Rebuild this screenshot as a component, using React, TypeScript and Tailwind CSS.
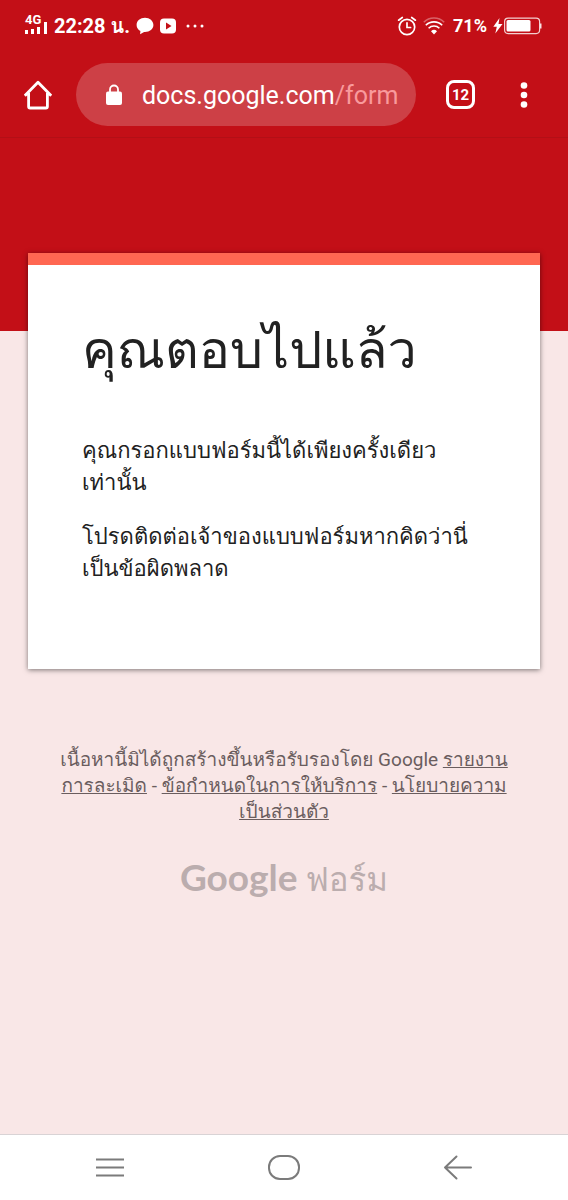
import React from "react";

function SignalIcon() {
  return (
    <svg width="24" height="26" viewBox="0 0 24 26" fill="#fff" aria-hidden="true">
      <rect x="1" y="17" width="3" height="4" />
      <rect x="7" y="16" width="3" height="5" />
      <rect x="13" y="14" width="3" height="7" />
      <rect x="20" y="9" width="3" height="12" />
    </svg>
  );
}

function ChatIcon() {
  return (
    <svg width="18" height="18" viewBox="0 0 18 18" fill="#fff" aria-hidden="true">
      <path d="M9 .8C4.300.8.6 3.900.6 8c0 2.700 1.500 4.900 3.800 6.100L4.100 17.200l4-2.200h.9c4.700 0 8.400-3 8.400-7S13.700.8 9 .8z" />
    </svg>
  );
}

function PlayIcon() {
  return (
    <svg width="16" height="16" viewBox="0 0 16 16" aria-hidden="true">
      <rect x="0" y=".5" width="16" height="15" rx="4" fill="#fff" />
      <path d="M6 4.500v7l5.500-3.500z" fill="#c30f17" />
    </svg>
  );
}

function AlarmIcon() {
  return (
    <svg width="20" height="20" viewBox="0 0 20 20" fill="none" stroke="#fff" strokeWidth="1.700" strokeLinecap="round" aria-hidden="true">
      <circle cx="10" cy="11" r="7.700" />
      <path d="M10 6.800V11.500h3.600M1.600 4.200 5.300 1.500M18.400 4.200l-3.700-2.700" />
    </svg>
  );
}

function WifiIcon() {
  return (
    <svg width="22" height="18" viewBox="0 0 22 18" fill="none" stroke="#fff" strokeWidth="1.600" aria-hidden="true">
      <path d="M.8 5.200a14.500 14.500 0 0 1 20.400 0" opacity=".35" />
      <path d="M2.800 8.300a11.500 11.500 0 0 1 16.400 0" />
      <path d="M5.600 11.300a7.600 7.600 0 0 1 10.800 0" />
      <path d="M8 14.200a4.400 4.400 0 0 1 6 0L11 17.400z" fill="#fff" stroke="none" />
    </svg>
  );
}

function BatteryIcon() {
  return (
    <svg width="49" height="18" viewBox="0 0 49 18" fill="none" aria-hidden="true">
      <path d="M6.500 1 .3 9.800h3.500L2.300 16.500 9.500 7H5.500z" fill="#fff" />
      <rect x="11.600" y="1.100" width="35" height="15.500" rx="3.500" stroke="#fff" strokeOpacity=".8" strokeWidth="1.200" />
      <rect x="13.500" y="3" width="24" height="11.500" rx="1.500" fill="#fff" />
      <rect x="47" y="6.500" width="1.500" height="5" fill="#fff" fillOpacity=".85" />
    </svg>
  );
}

function StatusBar() {
  return (
    <div className="flex h-[52px] items-center justify-between pr-[26px] pl-6 text-white">
      <div className="flex items-center">
        <div className="relative mr-1.5">
          <SignalIcon />
          <span className="absolute top-px left-px text-[13px] leading-3 font-bold">4G</span>
        </div>
        <span className="mr-1.5 text-[20px] leading-6 font-bold">22:28 น.</span>
        <ChatIcon />
        <span className="ml-1.5"><PlayIcon /></span>
        <svg className="ml-2.5" width="18" height="4" viewBox="0 0 18 4" fill="#fff" aria-hidden="true">
          <circle cx="2" cy="2" r="1.500" />
          <circle cx="9" cy="2" r="1.500" />
          <circle cx="16" cy="2" r="1.500" />
        </svg>
      </div>
      <div className="flex items-center">
        <AlarmIcon />
        <span className="ml-1.5"><WifiIcon /></span>
        <span className="mr-1.5 ml-2 text-[18px] leading-6 font-bold">71%</span>
        <BatteryIcon />
      </div>
    </div>
  );
}

function AddressBar() {
  return (
    <div className="flex h-[86px] items-center border-b border-[#b30f16] pr-[31px] pl-6">
      <button type="button" aria-label="หน้าแรก" className="shrink-0">
        <svg width="28" height="30" viewBox="0 0 28 30" fill="none" stroke="#fff" strokeWidth="2.800" strokeLinejoin="round" aria-hidden="true">
          <path d="M.8 15.800 14 2.200l13.200 13.600M4.600 13v13.500q0 1.500 1.500 1.500h15.800q1.500 0 1.500-1.500V13" />
        </svg>
      </button>
      <button type="button" className="ml-6 flex h-[63px] min-w-0 flex-1 items-center rounded-full bg-[#cd4046] pr-3 pl-[29px] text-left">
        <svg className="shrink-0" width="18" height="22" viewBox="0 0 18 22" aria-hidden="true">
          <rect x="1" y="7.500" width="16" height="13.500" rx="2" fill="#fff" />
          <path d="M5 8.500V5.500a4 4 0 0 1 8 0v3" fill="none" stroke="#fff" strokeWidth="1.800" />
        </svg>
        <span className="ml-[19px] pt-0.5 text-[25px] leading-8 whitespace-nowrap text-white">
          docs.google.com<span className="text-[#f99a9c]">/form</span>
        </span>
      </button>
      <button type="button" aria-label="แท็บ" className="ml-[30px] flex h-[29px] w-[29px] shrink-0 items-center justify-center rounded-lg border-3 border-white text-[15px] leading-5 font-bold text-white">
        12
      </button>
      <button type="button" aria-label="เมนู" className="ml-9 shrink-0">
        <svg width="26" height="28" viewBox="0 0 26 28" fill="#fff" aria-hidden="true">
          <circle cx="13" cy="4.500" r="3.300" />
          <circle cx="13" cy="14" r="3.300" />
          <circle cx="13" cy="23.500" r="3.300" />
        </svg>
      </button>
    </div>
  );
}

function SystemNav() {
  return (
    <nav className="flex h-[66px] items-center justify-around border-t border-[#d9d3d5] bg-white px-6 text-[#7b7b7b]">
      <button type="button" aria-label="แอปล่าสุด">
        <svg width="30" height="22" viewBox="0 0 30 22" stroke="currentColor" strokeWidth="2" aria-hidden="true">
          <path d="M1 2.500h28M1 10.500h28M1 18.500h28" />
        </svg>
      </button>
      <button type="button" aria-label="โฮม">
        <svg width="34" height="26" viewBox="0 0 34 26" fill="none" stroke="currentColor" strokeWidth="2" aria-hidden="true">
          <rect x="2" y="1" width="30" height="23" rx="11" />
        </svg>
      </button>
      <button type="button" aria-label="กลับ">
        <svg width="30" height="26" viewBox="0 0 30 26" fill="none" stroke="currentColor" strokeWidth="2" strokeLinecap="round" strokeLinejoin="round" aria-hidden="true">
          <path d="M28 12.500H2M13.500 1.500 2 12.500l11.500 11" />
        </svg>
      </button>
    </nav>
  );
}

export default function App() {
  return (
    <div className="flex min-h-screen flex-col bg-[#f9e7e7] font-['Roboto','Loma',sans-serif]">
      <header className="bg-[#c30f17]">
        <StatusBar />
        <AddressBar />
      </header>
      <main className="flex-1">
        <div className="h-[193px] bg-[#c30f17]" />
        <section className="relative mx-7 -mt-[78px] min-h-[416px] border-t-12 border-[#ff6752] bg-white px-[54px] pt-12 text-[#212121] shadow-[0_1px_5px_rgba(0,0,0,0.5)]">
          <h1 className="text-[52px] leading-[76px]">คุณตอบไปแล้ว</h1>
          <p className="mt-[46px] text-[22px] leading-8">
            คุณกรอกแบบฟอร์มนี้ได้เพียงครั้งเดียว
            <br />
            เท่านั้น
          </p>
          <p className="mt-[22px] text-[22px] leading-8">
            โปรดติดต่อเจ้าของแบบฟอร์มหากคิดว่านี่
            <br />
            เป็นข้อผิดพลาด
          </p>
        </section>
        <footer className="mt-[78px] text-center text-[#6a5d5e]">
          <p className="text-[19px] leading-[26px]">
            เนื้อหานี้มิได้ถูกสร้างขึ้นหรือรับรองโดย Google{" "}
            <a href="#report" className="underline">รายงาน<br />การละเมิด</a>
            {" - "}
            <a href="#terms" className="underline">ข้อกำหนดในการให้บริการ</a>
            {" - "}
            <a href="#privacy" className="underline">นโยบายความ<br />เป็นส่วนตัว</a>
          </p>
          <a href="#forms" className="mt-7 inline-flex items-baseline gap-2 text-[#bbadae]">
            <span className="font-['Lato',sans-serif] text-[37px] leading-[48px] font-bold">Google</span>
            <span className="text-[33px] leading-[48px]">ฟอร์ม</span>
          </a>
        </footer>
      </main>
      <SystemNav />
    </div>
  );
}
